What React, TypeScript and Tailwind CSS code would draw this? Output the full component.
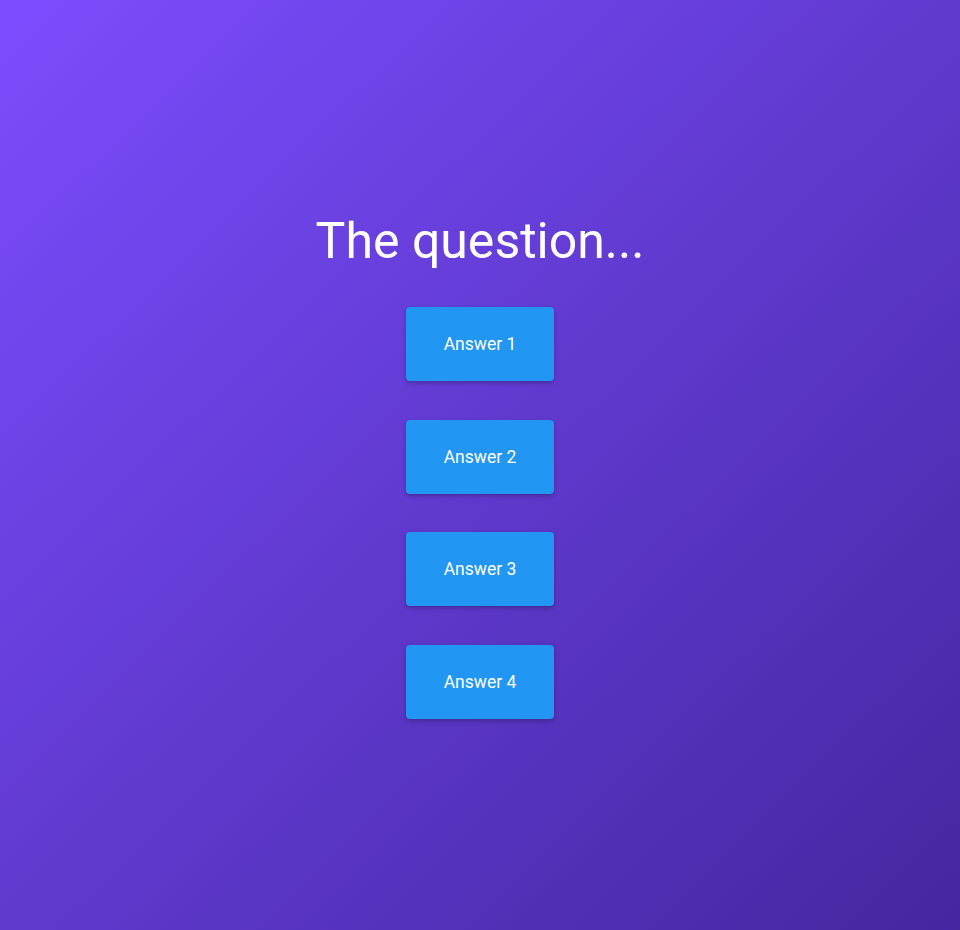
export default function App() {
  const answers = ["Answer 1", "Answer 2", "Answer 3", "Answer 4"];
  return (
    <div
      className="min-h-screen w-full flex flex-col items-center justify-center bg-gradient-to-br from-[#7c4dff] to-[#4527a0] text-white"
      style={{ fontFamily: "Roboto, 'Noto Sans', sans-serif" }}
    >
      <h1 className="text-[50px] leading-[60px] font-normal mb-[36px]">The question...</h1>
      <div className="flex flex-col items-center gap-[38.5px]">
        {answers.map((a) => (
          <button
            key={a}
            className="w-[148px] h-[74px] rounded-[4px] bg-[#2196f3] text-white text-[17.5px] shadow-[0_2px_4px_rgba(0,0,0,0.25)]"
          >
            {a}
          </button>
        ))}
      </div>
    </div>
  );
}
